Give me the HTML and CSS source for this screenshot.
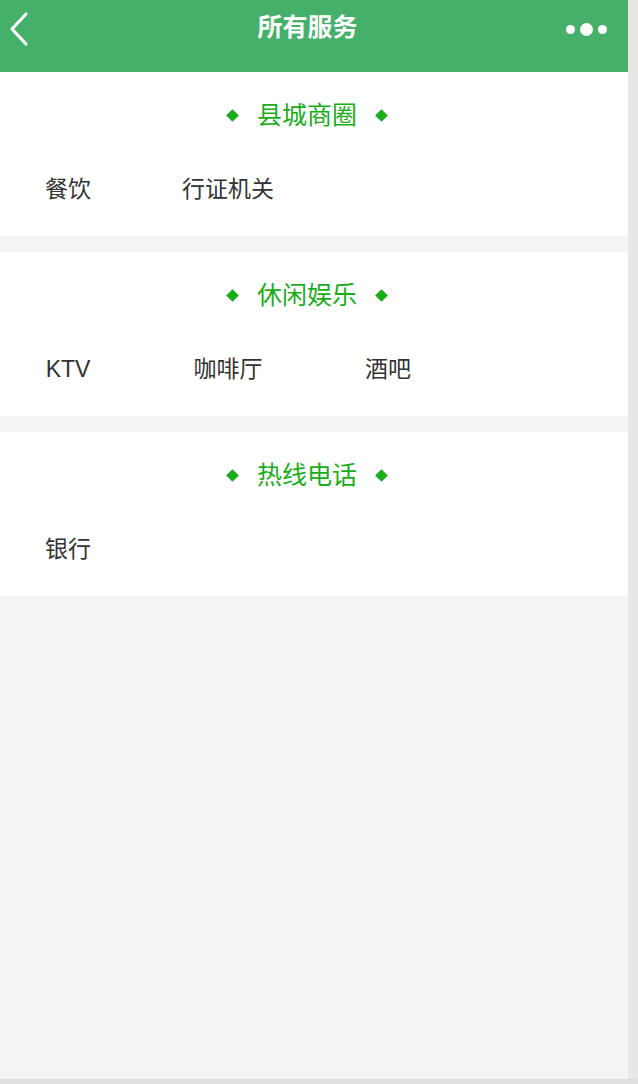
FILE: index.html
```html
<!DOCTYPE html>
<html lang="zh-CN">
<head>
<meta charset="utf-8">
<title>所有服务</title>
<link rel="stylesheet" href="styles.css">
</head>
<body>
<div class="frame">
  <div class="screen">
    <header class="navbar">
      <div class="nav-back">
        <svg width="22" height="36" viewBox="0 0 22 36"><path d="M18 3 L4 18 L18 33" fill="none" stroke="#fff" stroke-width="3.2" stroke-linecap="round" stroke-linejoin="round"/></svg>
      </div>
      <div class="nav-title">所有服务</div>
      <div class="nav-more">
        <span class="dot small"></span><span class="dot big"></span><span class="dot small"></span>
      </div>
    </header>
    <main class="content">
      <section class="group">
        <h2 class="group-title"><span class="diamond"></span><span class="title-text">县城商圈</span><span class="diamond"></span></h2>
        <div class="items">
          <div class="item">餐饮</div>
          <div class="item">行证机关</div>
        </div>
      </section>
      <section class="group">
        <h2 class="group-title"><span class="diamond"></span><span class="title-text">休闲娱乐</span><span class="diamond"></span></h2>
        <div class="items">
          <div class="item">KTV</div>
          <div class="item">咖啡厅</div>
          <div class="item">酒吧</div>
        </div>
      </section>
      <section class="group">
        <h2 class="group-title"><span class="diamond"></span><span class="title-text">热线电话</span><span class="diamond"></span></h2>
        <div class="items">
          <div class="item">银行</div>
        </div>
      </section>
    </main>
  </div>
  <div class="side-strip"></div>
</div>
<div class="bottom-strip"></div>
</body>
</html>
```

FILE: styles.css
```css
* { box-sizing: border-box; }
html, body { margin: 0; padding: 0; }
body {
  width: 638px;
  height: 1084px;
  overflow: hidden;
  font-family: "Liberation Sans", "Noto Sans CJK SC", sans-serif;
  background: #e2e1df;
}
.frame {
  display: flex;
  height: 1079px;
}
.screen {
  width: 628px;
  height: 1079px;
  background: #f4f4f4;
  display: flex;
  flex-direction: column;
}
.side-strip {
  width: 10px;
  background: #e8e7e5;
}
.bottom-strip {
  height: 5px;
  background: #e0dfdd;
}
.navbar {
  height: 72px;
  background: #45b06a;
  display: grid;
  grid-template-columns: 1fr auto 1fr;
  align-items: start;
  padding: 0 21px 0 8px;
}
.nav-back {
  width: 22px;
  height: 36px;
  margin-top: 11px;
}
.nav-back svg { display: block; }
.nav-title {
  color: #fff;
  font-size: 25px;
  font-weight: bold;
  line-height: 54px;
}
.nav-more {
  justify-self: end;
  display: flex;
  align-items: center;
  gap: 5px;
  height: 58px;
}
.dot {
  background: #fff;
  border-radius: 50%;
  display: block;
}
.dot.small { width: 9px; height: 9px; }
.dot.big { width: 13px; height: 13px; }
.content {
  display: flex;
  flex-direction: column;
  gap: 16px;
}
.group {
  background: #fff;
  height: 164px;
  padding-top: 23px;
}
.group-title {
  margin: 0;
  height: 40px;
  line-height: 40px;
  display: flex;
  align-items: center;
  justify-content: center;
  gap: 20px;
  padding-right: 14px;
  font-size: 25px;
  font-weight: normal;
  color: #1aad19;
}
.diamond {
  width: 9px;
  height: 9px;
  background: #1aad19;
  transform: rotate(45deg);
}
.items {
  margin-top: 34px;
  display: grid;
  grid-template-columns: repeat(3, 120px);
  column-gap: 40px;
  padding-left: 8px;
}
.item {
  text-align: center;
  font-size: 23px;
  line-height: 40px;
  color: #333;
}
```
